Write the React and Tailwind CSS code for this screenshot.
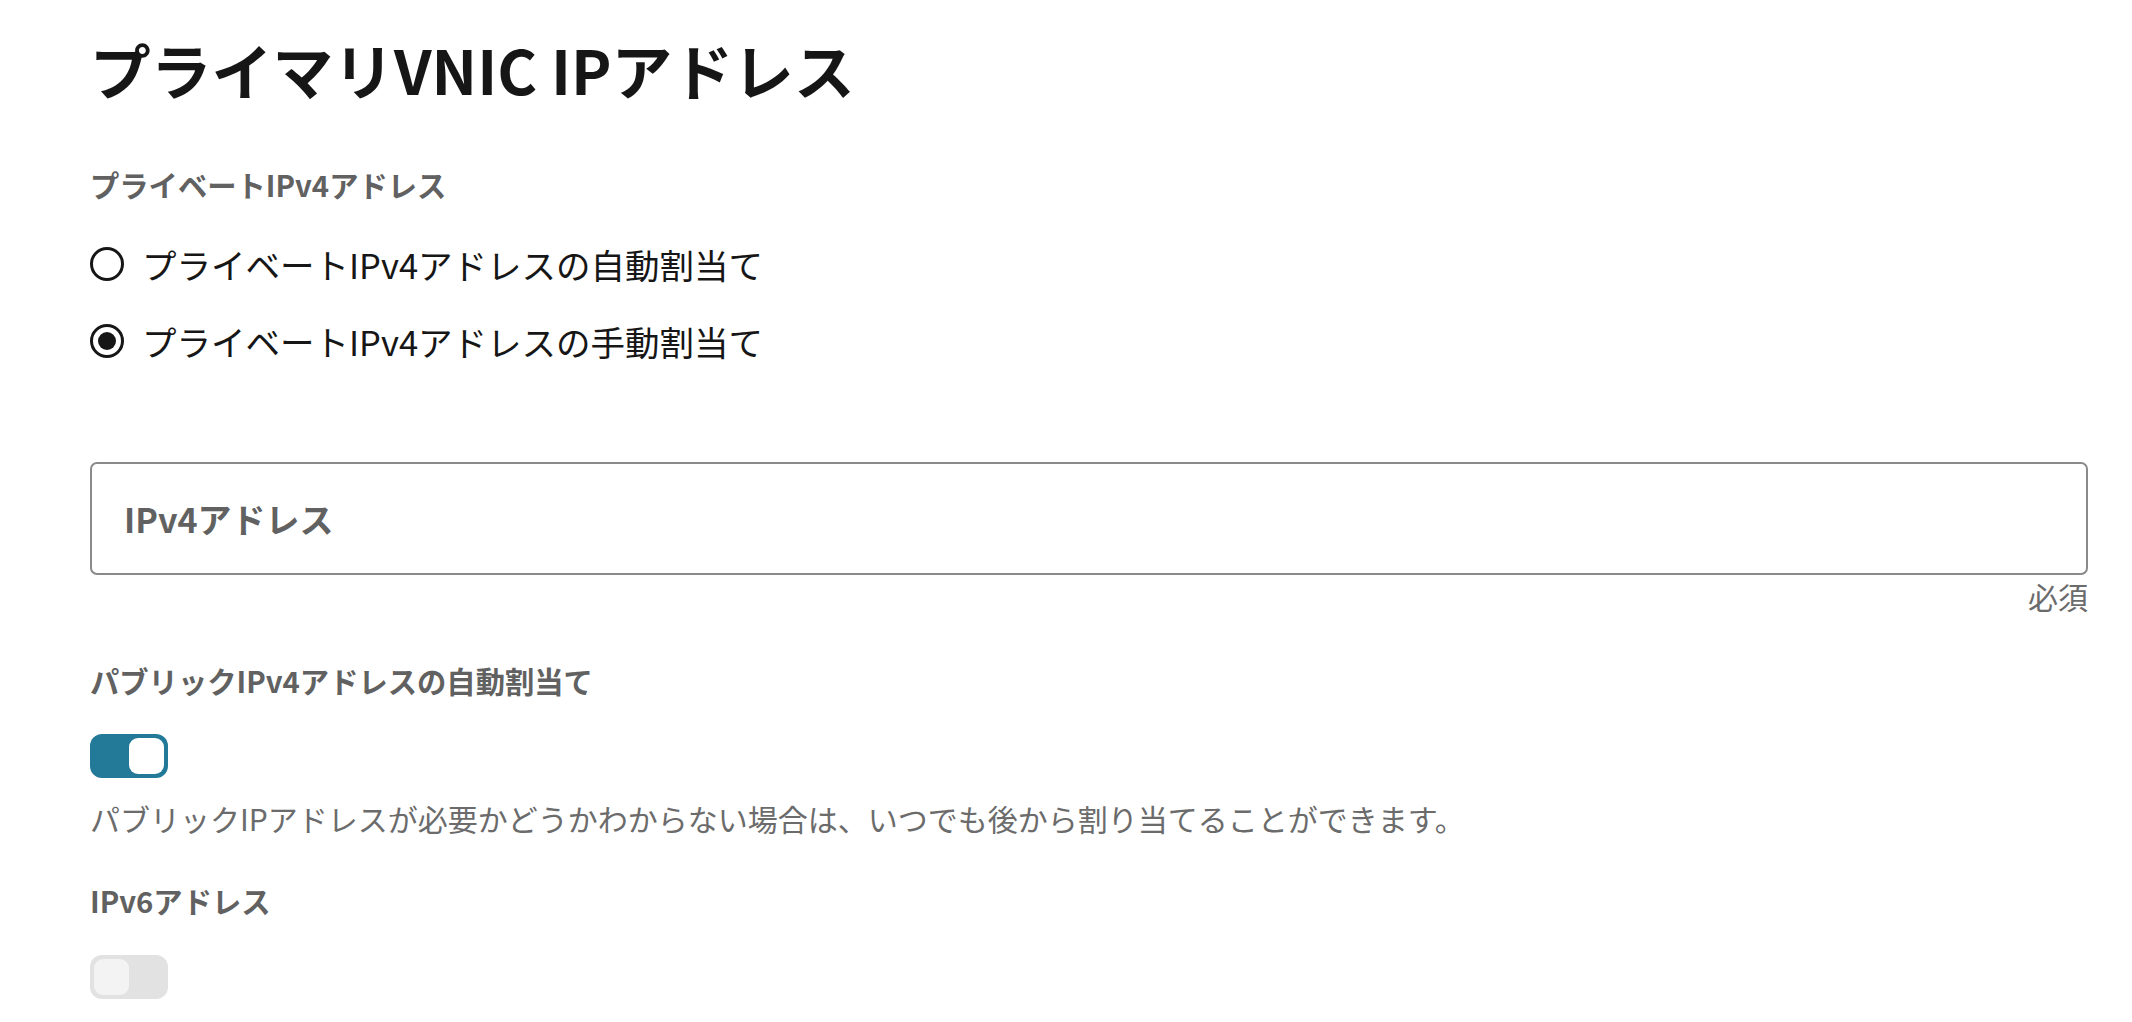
import React from "react";

const font = { fontFamily: '"Noto Sans CJK JP", "Noto Sans", sans-serif' };

const Radio = ({ checked, label }) => (
  <label className="flex items-center h-[40px] gap-[18px] cursor-pointer">
    <span className="w-[34px] h-[34px] rounded-full border-[3px] border-[#161616] flex items-center justify-center shrink-0">
      {checked && <span className="w-[18px] h-[18px] rounded-full bg-[#161616]" />}
    </span>
    <span className="text-[34.5px] leading-[40px] text-[#161616]">{label}</span>
  </label>
);

const Toggle = ({ on }) => (
  <div
    className={
      "w-[78px] h-[44px] rounded-[12px] flex items-center px-[4px] " +
      (on ? "bg-[#227a98] justify-end" : "bg-[#e2e2e2] justify-start")
    }
  >
    <div className={"w-[35px] h-[36px] rounded-[9px] " + (on ? "bg-white" : "bg-[#f3f3f3]")} />
  </div>
);

export default function App() {
  return (
    <div className="bg-white min-h-[1022px] w-full pl-[90px] pr-[44px] pt-[33px]" style={font}>
      <h1 className="text-[60.8px] leading-[72px] font-bold text-[#161616]">
        プライマリVNIC IPアドレス
      </h1>

      <div className="mt-[61px] text-[29.3px] leading-[36px] font-bold text-[#616161]">
        プライベートIPv4アドレス
      </div>

      <div className="mt-[42px] flex flex-col gap-[37px]">
        <Radio label="プライベートIPv4アドレスの自動割当て" />
        <Radio checked label="プライベートIPv4アドレスの手動割当て" />
      </div>

      <div className="mt-[101px]">
        <div className="h-[113px] border-2 border-[#8a8a8a] rounded-[7px] flex items-center px-[32px]">
          <span className="text-[34px] font-bold text-[#616161]">IPv4アドレス</span>
        </div>
        <div className="mt-[3px] text-right text-[30px] leading-[36px] text-[#6b6b6b]">必須</div>
      </div>

      <div className="mt-[48px] text-[29.3px] leading-[36px] font-bold text-[#616161]">
        パブリックIPv4アドレスの自動割当て
      </div>
      <div className="mt-[36px]">
        <Toggle on />
      </div>
      <p className="mt-[22px] text-[30px] leading-[36px] text-[#6b6b6b]">
        パブリックIPアドレスが必要かどうかわからない場合は、いつでも後から割り当てることができます。
      </p>

      <div className="mt-[46px] text-[29.3px] leading-[36px] font-bold text-[#616161]">
        IPv6アドレス
      </div>
      <div className="mt-[37px]">
        <Toggle />
      </div>
    </div>
  );
}
